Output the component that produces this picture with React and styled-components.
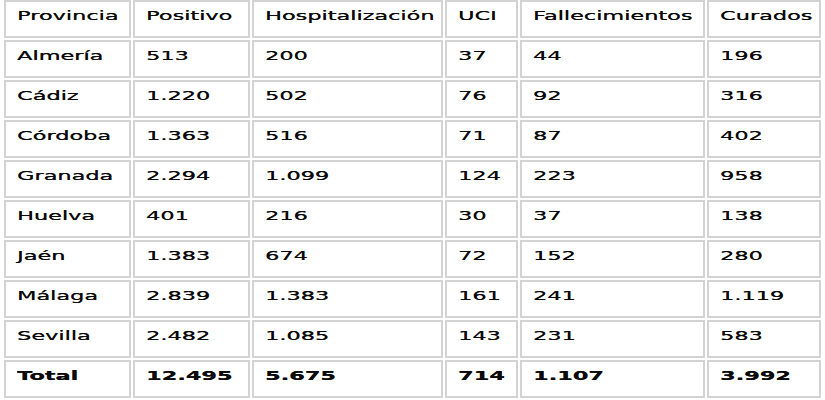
import React from "react";
import styled, { createGlobalStyle } from "styled-components";

const GlobalStyle = createGlobalStyle`
  html, body {
    margin: 0;
    padding: 0;
    background: #ffffff;
  }
  body {
    font-family: "DejaVu Sans", Verdana, sans-serif;
  }
`;

const columns = [
  { key: "provincia", title: "Provincia", width: 127 },
  { key: "positivo", title: "Positivo", width: 117 },
  { key: "hosp", title: "Hospitalización", width: 191 },
  { key: "uci", title: "UCI", width: 73 },
  { key: "fall", title: "Fallecimientos", width: 185 },
  { key: "curados", title: "Curados", width: 114 }
];

const rows = [
  ["Almería", "513", "200", "37", "44", "196"],
  ["Cádiz", "1.220", "502", "76", "92", "316"],
  ["Córdoba", "1.363", "516", "71", "87", "402"],
  ["Granada", "2.294", "1.099", "124", "223", "958"],
  ["Huelva", "401", "216", "30", "37", "138"],
  ["Jaén", "1.383", "674", "72", "152", "280"],
  ["Málaga", "2.839", "1.383", "161", "241", "1.119"],
  ["Sevilla", "2.482", "1.085", "143", "231", "583"]
];

const total = ["Total", "12.495", "5.675", "714", "1.107", "3.992"];

const Table = styled.table`
  margin-left: 2px;
  border-collapse: separate;
  border-spacing: 2px;
  margin-top: -2px;
  table-layout: fixed;
`;

const Cell = styled.td`
  box-sizing: border-box;
  height: 38px;
  padding: 6px 0 0 11px;
  vertical-align: top;
  border: 2px solid #d3d3d3;
  overflow: visible;
  white-space: nowrap;
  color: #0a0a0a;
  font-size: 12.5px;
  line-height: 15px;
  font-weight: ${(p) => (p.$bold ? 700 : 400)};
  text-shadow: 0.2px 0 0 #0a0a0a;
`;

const Label = styled.span`
  display: inline-block;
  transform: scaleX(1.79);
  transform-origin: left center;
`;

const Row = ({ cells, bold }) => (
  <tr>
    {cells.map((c, i) => (
      <Cell key={i} $bold={bold}>
        <Label>{c}</Label>
      </Cell>
    ))}
  </tr>
);

export default function App() {
  return (
    <>
      <GlobalStyle />
      <Table>
        <colgroup>
          {columns.map((c) => (
            <col key={c.key} style={{ width: c.width }} />
          ))}
        </colgroup>
        <tbody>
          <Row cells={columns.map((c) => c.title)} />
          {rows.map((r) => (
            <Row key={r[0]} cells={r} />
          ))}
          <Row cells={total} bold />
        </tbody>
      </Table>
    </>
  );
}
